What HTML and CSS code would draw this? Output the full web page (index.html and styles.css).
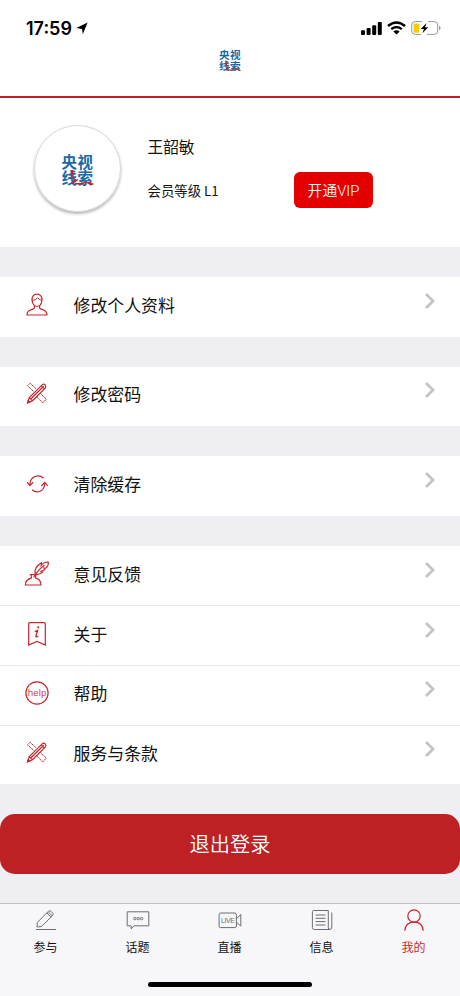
FILE: index.html
```html
<!DOCTYPE html>
<html lang="zh-CN">
<head>
  <meta charset="UTF-8" />
  <meta name="viewport" content="width=device-width, initial-scale=1.0"/>
  <title>我的</title>
  <link rel="stylesheet" href="styles.css">
</head>
<body>

  <!-- shared icons -->
  <svg class="defs" width="0" height="0">
    <symbol id="stroke" viewBox="0 0 32 32">
      <path d="M10.5 17 11 24 13 28.5M10 30.8 16 26.5M13 30.8H20.5L22.5 29.5H28.5V31H31.5" fill="none" stroke="#c3202b" stroke-width="1.4"/>
    </symbol>
    <symbol id="arrow" viewBox="0 0 12 18">
      <path d="M2 2 9 9 2 16" fill="none" stroke="#c4c4c6" stroke-width="2.8"/>
    </symbol>
    <symbol id="tools" viewBox="0 0 24 24">
      <path d="M8.4 9.2 2.5 3.8 5.2 1.3 11 6.8M15.2 11.2 21.2 17 17.8 21 11.8 15" stroke-width="1" stroke-dasharray="1.8 .5"/>
      <path d="M2.6 20.8 4.3 15.6 17.4 2.6Q18.8 1.6 20.1 2.8 21.4 4.2 20.4 5.8L7.6 18.7ZM4.3 15.6 7.6 18.7M5.8 17 18.7 4.2M16.2 3.8 19.2 6.9"/>
      <path d="M2.6 20.8 3.3 18.6 4.7 20Z" fill="currentColor"/>
    </symbol>
  </svg>

  <header>
    <div class="status">
      <div class="time">
        17:59
        <svg width="12" height="13" viewBox="0 0 12 13"><path d="M11.6.5 6.8 12.2 6 6.9.3 6Z"/></svg>
      </div>
      <div class="signals">
        <svg width="21" height="13" viewBox="0 0 21 13">
          <rect x="0" y="8.2" width="4" height="4.8" rx="1"/>
          <rect x="5.6" y="6" width="4" height="7" rx="1"/>
          <rect x="11.2" y="3.2" width="4" height="9.8" rx="1"/>
          <rect x="16.8" y="0" width="4" height="13" rx="1"/>
        </svg>
        <svg width="19" height="14" viewBox="0 0 19 14">
          <path d="M1 5Q9.5-2.2 18 5M4.2 8.2Q9.5 3.8 14.8 8.2" fill="none" stroke="#000" stroke-width="2.4"/>
          <path d="M9.5 13.4 6.4 10.5Q9.5 8.2 12.6 10.5Z"/>
        </svg>
        <svg width="30" height="14" viewBox="0 0 30 14">
          <path d="M11 .6H4.2Q.7.6.7 4V10Q.7 13.4 4.2 13.4H10M17 .6H23.2Q26.7.6 26.7 4V10Q26.7 13.4 23.2 13.4H16" fill="none" stroke="#999" stroke-width="1"/>
          <rect x="2.6" y="2.4" width="5.6" height="9.4" rx="1.2" fill="#ffc90a"/>
          <path d="M15.5 2 9.8 7.9H13L11.4 12.2 17.2 6.2H14Z"/>
          <path d="M28 4.7Q29.6 5.4 29.6 7T28 9.3Z" fill="#999"/>
        </svg>
      </div>
    </div>
    <div class="logo small">
      <div>央视</div>
      <div>线索</div>
      <svg><use href="#stroke"/></svg>
    </div>
  </header>

  <section class="profile">
    <div class="avatar">
      <div class="logo">
        <div>央视</div>
        <div>线索</div>
        <svg><use href="#stroke"/></svg>
      </div>
    </div>
    <div class="info">
      <div class="name">王韶敏</div>
      <div class="level">会员等级 L1</div>
    </div>
    <button class="vip">开通VIP</button>
  </section>

  <section class="group">
    <a class="row">
      <svg class="icon" viewBox="0 0 24 24">
        <path d="M12 1.2C8.5 1.2 6.8 3.8 7 7.2 7.2 10 8.4 11.6 9.4 12.8V14.8Q9.2 15.8 7 16.4C3.8 17.2 2 18.5 2 22H22C22 18.5 20.2 17.2 17 16.4Q14.8 15.8 14.6 14.8V12.8C15.8 11.6 16.8 10 17 7.2 17.2 3.8 15.5 1.2 12 1.2Z"/>
        <path d="M7 7.4Q10.8 7.3 12.7 4.8 14.2 7 17 7.4M9.4 12.6Q12 14.4 14.6 12.6" stroke-width="1"/>
      </svg>
      <span>修改个人资料</span>
      <svg class="arrow"><use href="#arrow"/></svg>
    </a>
  </section>

  <section class="group">
    <a class="row">
      <svg class="icon"><use href="#tools"/></svg>
      <span>修改密码</span>
      <svg class="arrow"><use href="#arrow"/></svg>
    </a>
  </section>

  <section class="group">
    <a class="row">
      <svg class="icon" viewBox="0 0 24 24">
        <path d="M18.6 6.2C14 2 5 3.6 4.8 13.2M2 10 4.8 13.6 8.2 10.3M7 17.8C12 22 19.6 19.6 19.9 10.8M16.3 14 19.9 10.3 22.8 14"/>
      </svg>
      <span>清除缓存</span>
      <svg class="arrow"><use href="#arrow"/></svg>
    </a>
  </section>

  <section class="group">
    <a class="row">
      <svg class="icon quill" viewBox="0 0 26 26">
        <path d="M5.8 13.6H12.8M7.3 14V17.2C4 18 1.4 20.3 1.4 24H17C17 20.3 14.8 18 11.7 17.2V14"/>
        <path d="M9.6 16.5Q11.5 12.6 15.5 8.4L20.6 4M11.3 12.8C9.8 8.6 13.2 4.2 17.4 1.8L17.2 4.4Q19.8.8 24.2 1C24.8 3.2 23.6 5.4 22.2 6.8L20 7 21 8.2Q19.6 10.2 17 10.4L18.4 11.6Q15.4 13.8 11.2 13.6"/>
      </svg>
      <span>意见反馈</span>
      <svg class="arrow"><use href="#arrow"/></svg>
    </a>
    <a class="row">
      <svg class="icon" viewBox="0 0 24 24">
        <path d="M3.7 23V1.8Q3.7.7 4.8.7H19.2Q20.3.7 20.3 1.8V23L12 19.4Z"/>
        <path d="M9.8 9.6 12.6 8.4 10.9 14Q10.7 15.8 13.4 14" stroke-width="1.3"/>
        <circle cx="13.2" cy="5.3" r=".7" fill="currentColor" stroke-width=".8"/>
      </svg>
      <span>关于</span>
      <svg class="arrow"><use href="#arrow"/></svg>
    </a>
    <a class="row">
      <svg class="icon" viewBox="0 0 24 24">
        <circle cx="12" cy="12" r="11.1"/>
        <text class="help" x="2.7" y="15" textLength="18.8">help</text>
      </svg>
      <span>帮助</span>
      <svg class="arrow"><use href="#arrow"/></svg>
    </a>
    <a class="row">
      <svg class="icon"><use href="#tools"/></svg>
      <span>服务与条款</span>
      <svg class="arrow"><use href="#arrow"/></svg>
    </a>
  </section>

  <button class="logout">退出登录</button>

  <footer>
    <nav>
      <a>
        <svg viewBox="0 0 24 24"><path d="M2 21.5H22M3 19 3.3 14.5 14.5 3.2Q15.7 2.3 17 3.3L18.8 5.2Q19.7 6.5 18.6 7.7L7.3 18.5ZM12.8 4.8 17 9.2M14.2 3.8 18.3 8"/></svg>
        参与
      </a>
      <a>
        <svg viewBox="0 0 24 24"><path d="M1.2 3.8H22.8V17.8H8L5.2 20.8V17.8H1.2Z"/><circle cx="8.8" cy="10.6" r="1.2"/><circle cx="12.2" cy="10.6" r="1.2"/><circle cx="15.6" cy="10.6" r="1.2"/></svg>
        话题
      </a>
      <a>
        <svg viewBox="0 0 24 24"><rect x="1.1" y="5" width="17.3" height="14.6" rx="1.6"/><path d="M18.5 10.8 22.8 6.4V18L18.5 14.4"/><text class="live" x="3" y="15.4" textLength="14">LIVE</text></svg>
        直播
      </a>
      <a>
        <svg viewBox="0 0 24 24"><path d="M18.3 2.5H3.6Q2.4 2.5 2.4 3.7V19.5Q2.4 21.5 4.4 21.5H19.2Q21.8 21.5 21.8 19V4.5M18.3 2.5V19.5Q18.3 21.5 20 21.5M5.5 7H15.5M5.5 10.3H15.5M5.5 13.6H15.5M5.5 17H15.5"/></svg>
        信息
      </a>
      <a class="active">
        <svg viewBox="0 0 24 24"><circle cx="12" cy="8" r="6.2"/><path d="M2.8 22.8C3.2 17.5 6.5 14.2 12 14.2S20.8 17.5 21.2 22.8"/></svg>
        我的
      </a>
    </nav>
    <div class="home-bar"></div>
  </footer>

</body>
</html>
```
FILE: styles.css
```css
* {
  box-sizing: border-box;
}

body {
  margin: 0;
  height: 996px;
  display: flex;
  flex-direction: column;
  overflow: hidden;
  font-family: 'Noto Sans CJK SC', sans-serif;
  background-color: #efeef3;
  color: #111;
}

.defs {
  position: absolute;
}

header {
  height: 98px;
  flex: none;
  display: flex;
  flex-direction: column;
  align-items: center;
  background-color: #fff;
  border-bottom: 2px solid #bd2027;
}

.status {
  width: 100%;
  height: 49px;
  padding: 14px 19px 0 26px;
  display: flex;
  justify-content: space-between;
}

.time {
  display: flex;
  align-items: center;
  gap: 4px;
  height: 28px;
  font-family: Inter, sans-serif;
  font-size: 18px;
  font-weight: 600;
  color: #000;
}

.signals {
  display: flex;
  align-items: center;
  gap: 5px;
  height: 28px;
}

.logo {
  position: relative;
  width: 32px;
  height: 32px;
  font-size: 15.4px;
  line-height: 16px;
  letter-spacing: 0.6px;
  white-space: nowrap;
  font-weight: 700;
  color: #176aa6;
}

.logo svg {
  position: absolute;
  top: 0;
  left: 0;
  width: 100%;
  height: 100%;
}

.logo.small {
  width: 22px;
  height: 22px;
  font-size: 10.6px;
  line-height: 11px;
  letter-spacing: 0.4px;
}

.profile {
  height: 149px;
  flex: none;
  display: flex;
  align-items: flex-start;
  padding: 27px 34px 0;
  background-color: #fff;
}

.avatar {
  width: 87px;
  height: 87px;
  display: flex;
  align-items: center;
  justify-content: center;
  border: 1px solid #d8d8d8;
  border-radius: 50%;
  box-shadow: 0 2px 3px rgba(0,0,0,0.3);
}

.info {
  width: 173px;
  padding: 10px 0 0 26.5px;
}

.name {
  font-size: 15.7px;
  line-height: 24px;
}

.level {
  margin-top: 21px;
  font-size: 13.4px;
  line-height: 20px;
}

.vip {
  width: 79px;
  height: 36px;
  margin-top: 47px;
  padding: 0 0 1px;
  border: none;
  border-radius: 6px;
  background-color: #e50000;
  color: #fff;
  font-family: Roboto, 'Noto Sans CJK SC', sans-serif;
  font-size: 14.8px;
  font-weight: 350;
}

.group {
  flex: none;
  margin-top: 30px;
  background-color: #fff;
}

.row {
  height: 59.6px;
  display: flex;
  align-items: center;
  padding: 0 24px 0 25px;
}

.row + .row {
  border-top: 1px solid #e9e9ec;
}

.row span {
  flex: 1;
  margin-left: 24.5px;
  padding-bottom: 5px;
  font-size: 16.9px;
}

.icon {
  width: 24px;
  height: 24px;
  margin-top: -4px;
  fill: none;
  stroke: #c9252c;
  stroke-width: 1.2;
  color: #c9252c;
}

.quill {
  width: 26px;
  height: 26px;
  margin: -4px -1px 0;
}

.help {
  font-family: 'Liberation Sans', sans-serif;
  font-size: 9.8px;
  fill: #d8464b;
  stroke: none;
}

.arrow {
  width: 12px;
  height: 18px;
  margin-top: -12px;
}

.logout {
  height: 59.6px;
  flex: none;
  margin: 30px 0 0;
  border: none;
  border-radius: 15px;
  background-color: #bd2124;
  color: #fff;
  font-family: inherit;
  font-size: 20.2px;
  font-weight: 350;
}

footer {
  height: 93px;
  flex: none;
  margin-top: auto;
  display: flex;
  flex-direction: column;
  align-items: center;
  justify-content: space-between;
  padding-bottom: 9px;
  border-top: 1px solid #bfbfc3;
  background-color: #f7f7f9;
}

nav {
  width: 100%;
  display: flex;
}

nav a {
  flex: 1;
  display: flex;
  flex-direction: column;
  align-items: center;
  padding: 4px 1px 0 0;
  font-size: 12px;
  line-height: 18px;
}

nav svg {
  width: 24px;
  height: 24px;
  margin-bottom: 6px;
  fill: none;
  stroke: #6d6d70;
  stroke-width: 1;
}

nav .active {
  color: #c9252c;
}

nav .active svg {
  stroke: #c9252c;
  stroke-width: 1.2;
}

.live {
  font-family: 'Liberation Sans', sans-serif;
  font-size: 7px;
  fill: #6d6d70;
  stroke: none;
}

.home-bar {
  width: 164px;
  height: 5.5px;
  border-radius: 3px;
  background-color: #000;
}
```
